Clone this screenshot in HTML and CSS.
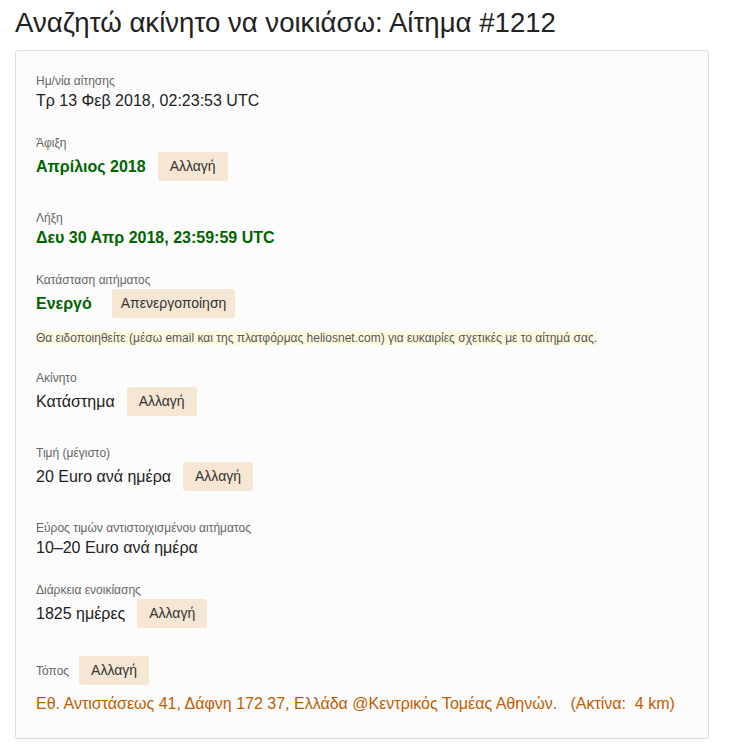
FILE: index.html
```html
<!DOCTYPE html>
<html lang="el">
<head>
  <meta charset="UTF-8" />
  <meta name="viewport" content="width=device-width, initial-scale=1" />
  <title>Αίτημα #1212</title>
  <link rel="stylesheet" href="styles.css">
</head>
<body>
  <h1>Αναζητώ ακίνητο να νοικιάσω: Αίτημα #1212</h1>

  <div class="card">
    <div class="field">
      <div class="label">Ημ/νία αίτησης</div>
      <div class="value">Τρ 13 Φεβ 2018, 02:23:53 UTC</div>
    </div>

    <div class="field tall">
      <div class="label">Άφιξη</div>
      <div class="value"><span class="ok">Απρίλιος 2018</span><button>Αλλαγή</button></div>
    </div>

    <div class="field">
      <div class="label">Λήξη</div>
      <div class="value"><span class="ok">Δευ 30 Απρ 2018, 23:59:59 UTC</span></div>
    </div>

    <div class="field">
      <div class="label">Κατάσταση αιτήματος</div>
      <div class="value"><span class="ok">Ενεργό</span><button class="wide">Απενεργοποίηση</button></div>
      <div class="notice"><mark>Θα ειδοποιηθείτε (μέσω email και της πλατφόρμας heliosnet.com) για ευκαιρίες σχετικές με το αίτημά σας.</mark></div>
    </div>

    <div class="field tall">
      <div class="label">Ακίνητο</div>
      <div class="value"><span>Κατάστημα</span><button>Αλλαγή</button></div>
    </div>

    <div class="field tall">
      <div class="label">Τιμή (μέγιστο)</div>
      <div class="value"><span>20 Euro ανά ημέρα</span><button>Αλλαγή</button></div>
    </div>

    <div class="field">
      <div class="label">Εύρος τιμών αντιστοιχισμένου αιτήματος</div>
      <div class="value">10–20 Euro ανά ημέρα</div>
    </div>

    <div class="field tall">
      <div class="label">Διάρκεια ενοικίασης</div>
      <div class="value"><span>1825 ημέρες</span><button>Αλλαγή</button></div>
    </div>

    <div class="field last">
      <div class="place-head"><span class="label">Τόπος</span><button>Αλλαγή</button></div>
      <div class="address">Εθ. Αντιστάσεως 41, Δάφνη 172 37, Ελλάδα @Κεντρικός Τομέας Αθηνών. &nbsp; (Ακτίνα: &nbsp;4 km)</div>
    </div>
  </div>
</body>
</html>
```

FILE: styles.css
```css
body {
  margin: 0;
  padding: 0 15px;
  background: #fff;
  color: #333;
  font-family: 'Liberation Sans', Arial, sans-serif;
  font-size: 14px;
}
h1 {
  margin: 0;
  padding-top: 5px;
  font-size: 27.6px;
  font-weight: 400;
  line-height: 36px;
  color: #222;
  margin-bottom: 9px;
}
.card {
  width: 652px;
  background: #fcfcfc;
  border: 1px solid #dcdcdc;
  border-radius: 3px;
  padding: 21px 20px 23px;
}
.field {
  margin-bottom: 22px;
}
.field.tall {
  margin-bottom: 28px;
}
.field.last {
  margin-bottom: 0;
}
.label {
  font-size: 12px;
  line-height: 18px;
  color: #666;
}
.value {
  display: flex;
  align-items: center;
  gap: 12px;
  font-size: 16px;
  line-height: 22px;
  color: #222;
}
.ok {
  color: #006400;
  font-weight: 700;
}
button {
  font-family: inherit;
  font-size: 14px;
  line-height: 19px;
  padding: 5px 12px;
  border: none;
  border-radius: 3px;
  background: #f6e6d4;
  color: #333;
  cursor: pointer;
}
button:hover {
  background: #efdcc5;
}
button.wide {
  margin-left: 8px;
  padding: 5px 9px;
}
.notice {
  margin-top: 12px;
  font-size: 12px;
  line-height: 17px;
}
.notice mark {
  background: #fdf9e1;
  color: #555;
  padding: 0;
}
.place-head {
  display: flex;
  align-items: center;
  gap: 10px;
}
.address {
  margin-top: 8px;
  font-size: 16px;
  line-height: 22px;
  color: #c05c00;
}
```
